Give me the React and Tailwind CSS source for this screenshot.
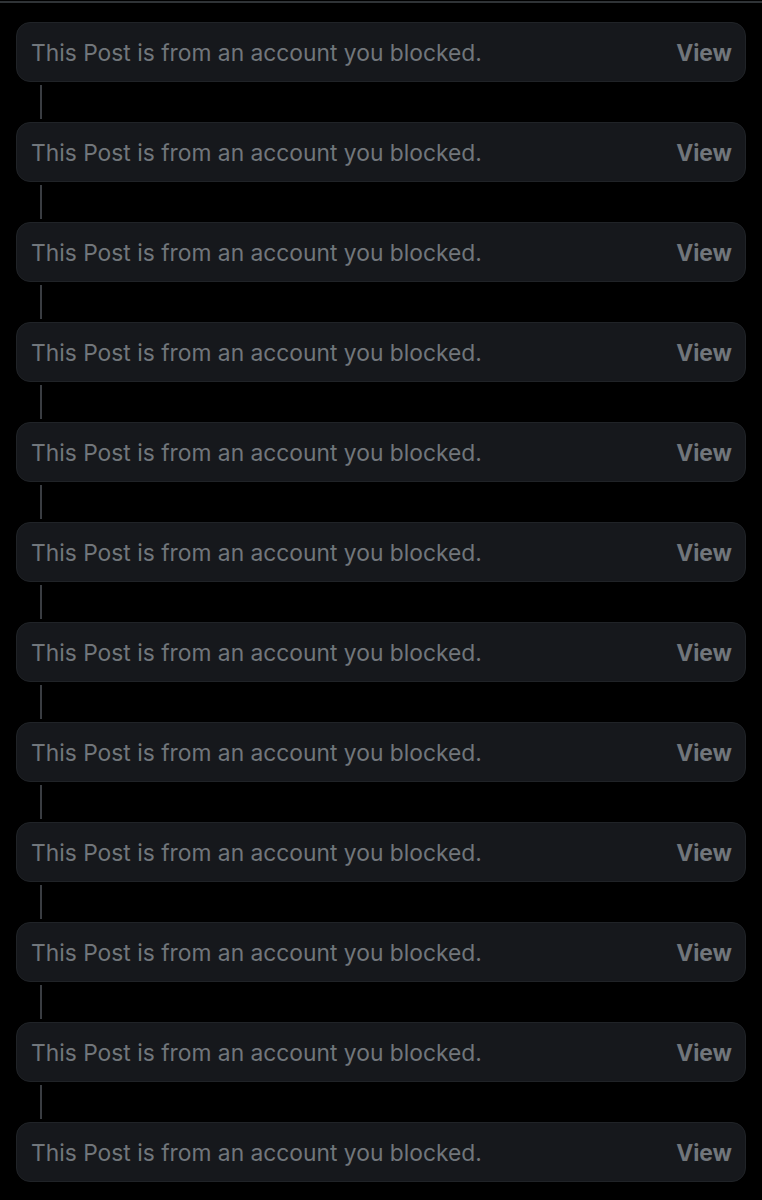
import React from "react";

const rows = Array.from({ length: 12 }, (_, i) => i);

const BlockedCard = () => (
  <div className="flex items-center justify-between h-[60px] rounded-[14px] bg-[#16181c] border border-[#202327] pl-[14px] pr-[13px] pt-[3px]">
    <span className="text-[22.8px] text-[#71767b] leading-none">
      This Post is from an account you blocked.
    </span>
    <span className="text-[22.8px] font-bold text-[#71767b] leading-none">View</span>
  </div>
);

const App = () => {
  return (
    <div
      className="w-[762px] h-[1200px] bg-black overflow-hidden"
      style={{ fontFamily: "Inter, 'Noto Sans', sans-serif" }}
    >
      <div className="h-[2px] mt-px bg-[#2f3336]" />
      <div className="pt-[19px] pl-[16px] pr-[16px]">
        {rows.map((i) => (
          <div key={i}>
            <BlockedCard />
            {i < rows.length - 1 && (
              <div className="h-[40px] py-[3px] pl-[24px]">
                <div className="w-[2px] h-full bg-[#3a3d42]" />
              </div>
            )}
          </div>
        ))}
      </div>
    </div>
  );
};

export default App;
